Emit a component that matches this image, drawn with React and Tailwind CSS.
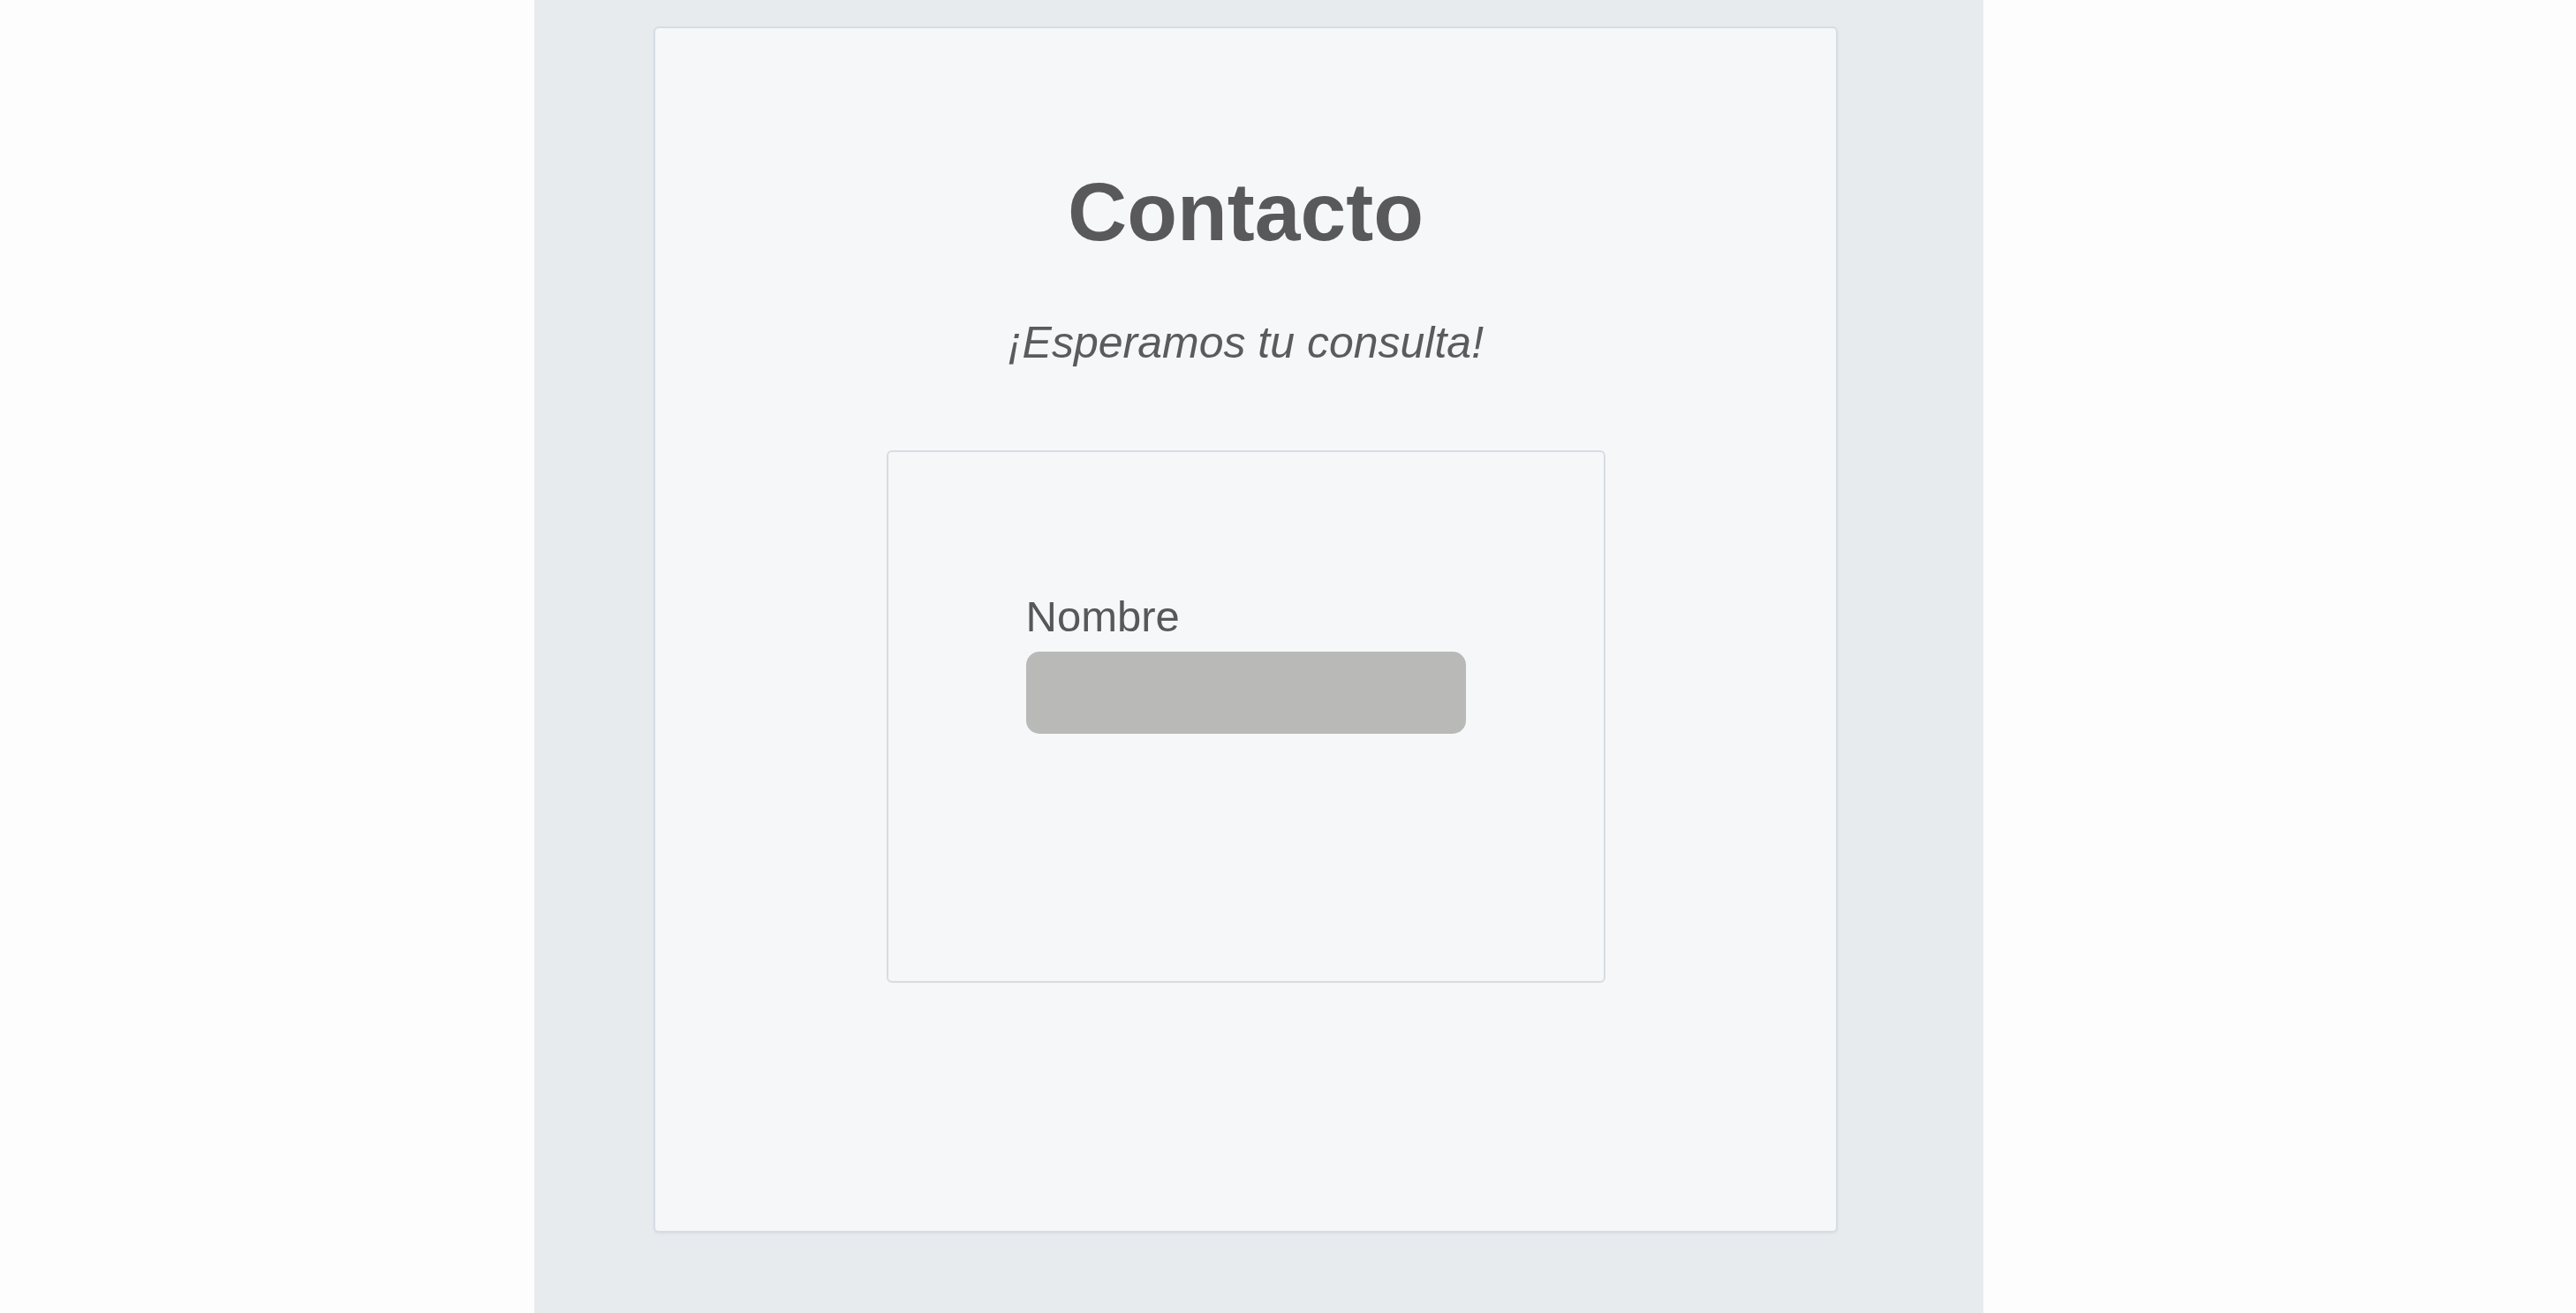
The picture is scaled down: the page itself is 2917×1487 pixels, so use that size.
import React from "react";

export default function App() {
  return (
    <div
      className="min-h-screen w-full bg-[#fdfdfd]"
      style={{ fontFamily: '"Liberation Sans", Arial, sans-serif' }}
    >
      <div className="ml-[605px] w-[1641px] h-[1487px] bg-[#e8ebee] pt-[30px] pl-[135px] flex flex-col items-start">
        <div className="w-[1341px] h-[1366px] bg-[#f6f7f8] border-2 border-[#d5dde4] rounded-[6px] shadow-[0_1px_3px_rgba(0,0,0,0.06)] flex flex-col items-center">
          <h1 className="mt-[162px] text-[93px] leading-none font-bold text-[#59595b]">
            Contacto
          </h1>
          <p className="mt-[76px] text-[50px] leading-none italic text-[#5b5b5d]">
            ¡Esperamos tu consulta!
          </p>
          <div className="mt-[97px] w-[814px] h-[603px] border-2 border-[#d5dde4] rounded-[6px] flex flex-col items-center pt-[162px]">
            <div className="w-[498px] flex flex-col">
              <label className="text-[49px] leading-none text-[#58585a]">Nombre</label>
              <div className="mt-[15px] h-[93px] w-[498px] rounded-[15px] bg-[#b9b9b8]"></div>
            </div>
          </div>
        </div>
      </div>
    </div>
  );
}
